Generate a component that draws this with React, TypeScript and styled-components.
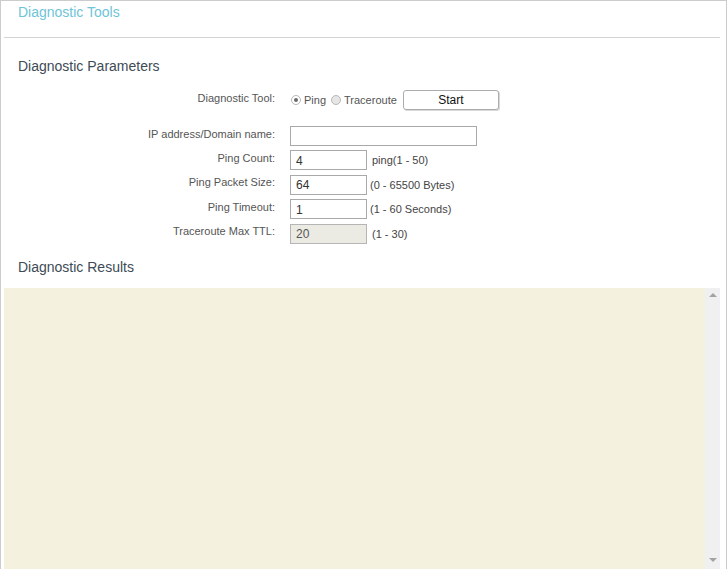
import React from 'react'
import styled, { createGlobalStyle } from 'styled-components'

const GlobalStyle = createGlobalStyle`
  html, body {
    margin: 0;
    padding: 0;
    background: #ffffff;
  }
  body {
    font-family: "Liberation Sans", Arial, sans-serif;
  }
`

const Page = styled.div`
  box-sizing: border-box;
  width: 727px;
  height: 569px;
  border: 1px solid #cccccc;
  border-bottom: none;
  padding: 0 6px 0 3px;
  display: flex;
  flex-direction: column;
  overflow: hidden;
`

const Header = styled.div`
  padding: 3px 0 16px 14px;
  border-bottom: 1px solid #d4d4d4;
  font-size: 14px;
  line-height: 17px;
  color: #6ec4d7;
`

const SectionTitle = styled.div<{ $top: number; $bottom: number }>`
  margin: ${(p) => p.$top}px 0 ${(p) => p.$bottom}px 14px;
  font-size: 14px;
  line-height: 17px;
  color: #3d4b56;
`

const Form = styled.div`
  display: flex;
  flex-direction: column;
`

const Row = styled.div<{ $gap?: number }>`
  display: flex;
  align-items: center;
  height: 20px;
  margin-bottom: ${(p) => p.$gap ?? 4.5}px;
`

const Label = styled.div`
  width: 271px;
  text-align: right;
  font-size: 11px;
  line-height: 13px;
  color: #555555;
  padding-bottom: 4px;
  margin-right: 15px;
`

const Input = styled.input<{ $w: number }>`
  box-sizing: border-box;
  width: ${(p) => p.$w}px;
  height: 20px;
  border: 1px solid #a9a9a9;
  padding: 1px 5px 0;
  font-family: "Liberation Sans", Arial, sans-serif;
  font-size: 12px;
  color: #333333;
  background: #ffffff;
  outline: none;
  &:disabled {
    background: #ebebe4;
    border-color: #b5b5b5;
    color: #555555;
  }
`

const Hint = styled.span<{ $ml: number }>`
  margin-left: ${(p) => p.$ml}px;
  font-size: 11px;
  color: #444444;
`

const RadioGroup = styled.div`
  display: flex;
  align-items: center;
  padding-left: 1px;
`

const RadioDot = styled.span<{ $on?: boolean }>`
  box-sizing: border-box;
  width: 10px;
  height: 10px;
  border-radius: 50%;
  border: 1px solid #b8b8b8;
  background: ${(p) => (p.$on ? '#ffffff' : '#e6e6e6')};
  display: inline-flex;
  align-items: center;
  justify-content: center;
  margin-right: 3px;
  &::after {
    content: '';
    width: 4px;
    height: 4px;
    border-radius: 50%;
    background: ${(p) => (p.$on ? '#6a6a6a' : 'transparent')};
  }
`

const RadioText = styled.span<{ $mr: number }>`
  font-size: 11px;
  color: #555555;
  margin-right: ${(p) => p.$mr}px;
`

const StartButton = styled.button`
  box-sizing: border-box;
  width: 96px;
  height: 20px;
  margin-left: 0;
  border: 1px solid #acacac;
  border-radius: 3px;
  background: #ffffff;
  box-shadow: 1px 1px 0 #d8d8d8;
  font-family: "Liberation Sans", Arial, sans-serif;
  font-size: 12px;
  color: #111111;
  padding: 0;
`

const Results = styled.div`
  flex: 1;
  display: flex;
  background: #f4f2df;
`

const ResultsBody = styled.div`
  flex: 1;
`

const Scrollbar = styled.div`
  width: 15px;
  background: #f0f0f0;
  display: flex;
  flex-direction: column;
  justify-content: space-between;
  align-items: center;
  padding: 5px 0 7px;
`

const Arrow = styled.span<{ $down?: boolean }>`
  width: 0;
  height: 0;
  border-left: 4px solid transparent;
  border-right: 4px solid transparent;
  ${(p) => (p.$down ? 'border-top: 4px solid #a3a3a3;' : 'border-bottom: 4px solid #a3a3a3;')}
`

const params = [
  { label: 'Ping Count:', value: '4', hint: 'ping(1 - 50)', ml: 5 },
  { label: 'Ping Packet Size:', value: '64', hint: '(0 - 65500 Bytes)', ml: 3 },
  { label: 'Ping Timeout:', value: '1', hint: '(1 - 60 Seconds)', ml: 3 },
  { label: 'Traceroute Max TTL:', value: '20', hint: '(1 - 30)', ml: 5, disabled: true },
]

const App: React.FC = () => {
  return (
    <>
      <GlobalStyle />
      <Page>
        <Header>Diagnostic Tools</Header>
        <SectionTitle $top={20} $bottom={15}>Diagnostic Parameters</SectionTitle>
        <Form>
          <Row $gap={16}>
            <Label>Diagnostic Tool:</Label>
            <RadioGroup>
              <RadioDot $on />
              <RadioText $mr={5}>Ping</RadioText>
              <RadioDot />
              <RadioText $mr={6}>Traceroute</RadioText>
            </RadioGroup>
            <StartButton>Start</StartButton>
          </Row>
          <Row $gap={4}>
            <Label>IP address/Domain name:</Label>
            <Input $w={187} defaultValue="" />
          </Row>
          {params.map((p) => (
            <Row key={p.label}>
              <Label>{p.label}</Label>
              <Input $w={77} defaultValue={p.value} disabled={p.disabled} />
              <Hint $ml={p.ml}>{p.hint}</Hint>
            </Row>
          ))}
        </Form>
        <SectionTitle $top={11} $bottom={12}>Diagnostic Results</SectionTitle>
        <Results>
          <ResultsBody />
          <Scrollbar>
            <Arrow />
            <Arrow $down />
          </Scrollbar>
        </Results>
      </Page>
    </>
  )
}

export default App
